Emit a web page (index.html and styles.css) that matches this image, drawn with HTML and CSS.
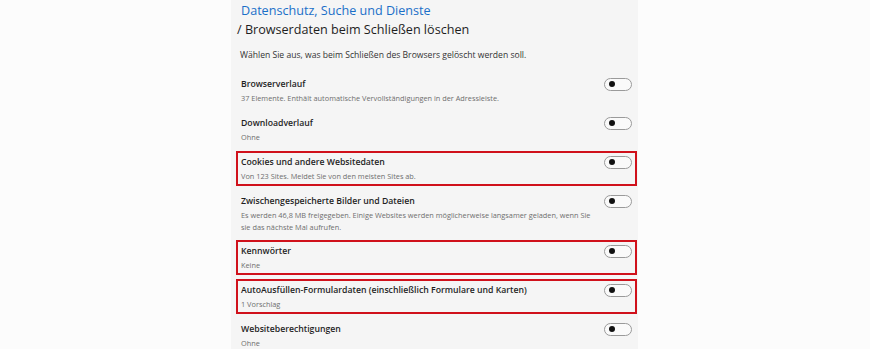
FILE: index.html
```html
<!DOCTYPE html>
<html lang="de">
<head>
    <meta charset="UTF-8">
    <meta name="viewport" content="width=device-width, initial-scale=1.0">
    <title>Browserdaten beim Schließen löschen</title>
    <link rel="stylesheet" href="styles.css">
</head>
<body>
    <div class="panel">
        <div class="header">
            <div class="crumb">Datenschutz, Suche und Dienste</div>
            <h1>/ Browserdaten beim Schließen löschen</h1>
            <p class="intro">Wählen Sie aus, was beim Schließen des Browsers gelöscht werden soll.</p>
        </div>

        <div class="rows">
            <div class="row">
                <div class="row-text">
                    <div class="row-title">Browserverlauf</div>
                    <div class="row-sub">37 Elemente. Enthält automatische Vervollständigungen in der Adressleiste.</div>
                </div>
                <span class="toggle"></span>
            </div>
            <div class="row">
                <div class="row-text">
                    <div class="row-title">Downloadverlauf</div>
                    <div class="row-sub">Ohne</div>
                </div>
                <span class="toggle"></span>
            </div>
            <div class="row marked">
                <div class="row-text">
                    <div class="row-title">Cookies und andere Websitedaten</div>
                    <div class="row-sub">Von 123 Sites. Meldet Sie von den meisten Sites ab.</div>
                </div>
                <span class="toggle"></span>
            </div>
            <div class="row">
                <div class="row-text">
                    <div class="row-title">Zwischengespeicherte Bilder und Dateien</div>
                    <div class="row-sub">Es werden 46,8 MB freigegeben. Einige Websites werden möglicherweise langsamer geladen, wenn Sie sie das nächste Mal aufrufen.</div>
                </div>
                <span class="toggle"></span>
            </div>
            <div class="row marked">
                <div class="row-text">
                    <div class="row-title">Kennwörter</div>
                    <div class="row-sub">Keine</div>
                </div>
                <span class="toggle"></span>
            </div>
            <div class="row marked">
                <div class="row-text">
                    <div class="row-title">AutoAusfüllen-Formulardaten (einschließlich Formulare und Karten)</div>
                    <div class="row-sub">1 Vorschlag</div>
                </div>
                <span class="toggle"></span>
            </div>
            <div class="row">
                <div class="row-text">
                    <div class="row-title">Websiteberechtigungen</div>
                    <div class="row-sub">Ohne</div>
                </div>
                <span class="toggle"></span>
            </div>
        </div>
    </div>
</body>
</html>
```

FILE: styles.css
```css
body {
    font-family: "Open Sans", "Noto Sans", Arial, sans-serif;
    background-color: #fcfcfc;
    margin: 0;
    height: 349px;
    overflow: hidden;
}
.panel {
    margin-left: 231px;
    width: 407px;
    height: 349px;
    background-color: #f5f5f5;
}
.header {
    padding: 1px 0 0 10px;
}
.crumb {
    color: #1a6fc8;
    font-size: 12.6px;
    line-height: 19px;
}
.header h1 {
    margin: 0 0 0 -4px;
    font-size: 12.6px;
    font-weight: 400;
    color: #1e1e1e;
    line-height: 19px;
}
.intro {
    margin: 10px 0 0 -1px;
    font-size: 8.6px;
    line-height: 12px;
    color: #333;
}
.rows {
    margin-top: 12px;
    margin-left: 5px;
    width: 401px;
    display: flex;
    flex-direction: column;
    gap: 4px;
}
.row {
    display: flex;
    align-items: flex-start;
    border: 2px solid transparent;
    padding: 2px 3px 1px 3px;
    min-height: 28px;
}
.row.marked {
    border-color: #d0111b;
}
.row-text {
    flex: 1;
}
.row-title {
    font-size: 8.7px;
    font-weight: 600;
    line-height: 14px;
    color: #1f1f1f;
}
.row-sub {
    margin-top: 1px;
    font-size: 7.35px;
    line-height: 12px;
    color: #6e6e6e;
    max-width: 356px;
}
.toggle {
    position: relative;
    flex: none;
    width: 26px;
    height: 11px;
    margin-top: 0.5px;
    border: 1px solid #9a9a9a;
    border-radius: 7px;
    background-color: #fafafa;
}
.toggle::after {
    content: "";
    position: absolute;
    left: 4px;
    top: 2.5px;
    width: 6px;
    height: 6px;
    border-radius: 50%;
    background-color: #111;
}
```
